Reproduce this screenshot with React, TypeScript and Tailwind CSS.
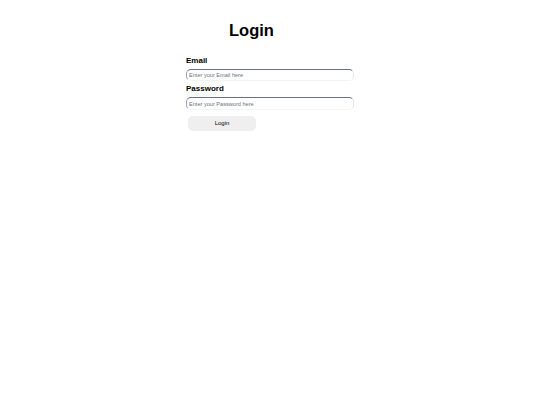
export default function App() {
  return (
    <div className="min-h-[405px] w-[540px] bg-white font-['Liberation_Sans',Arial,sans-serif] text-black">
      <div className="ml-[186px] w-[168px] pt-[20px]">
        {/* Title */}
        <h1 className="ml-[43px] text-[16.5px] font-bold leading-[20px]">Login</h1>

        <form className="mt-[16px] flex flex-col" onSubmit={(e) => e.preventDefault()}>
          <label htmlFor="email" className="text-[8px] font-bold leading-[10px]">
            Email
          </label>
          <input
            id="email"
            type="email"
            placeholder="Enter your Email here"
            className="mt-[3px] h-[12px] w-[168px] rounded-[5px] border border-t-gray-500 border-l-gray-400 border-r-gray-200 border-b-gray-100 pl-[2px] text-[5.6px] outline-none placeholder:text-gray-500"
          />

          <label htmlFor="password" className="mt-[3px] text-[8px] font-bold leading-[10px]">
            Password
          </label>
          <input
            id="password"
            type="password"
            placeholder="Enter your Password here"
            className="mt-[3px] h-[13px] w-[168px] rounded-[5px] border border-t-gray-500 border-l-gray-400 border-r-gray-200 border-b-gray-100 pl-[2px] text-[5.6px] outline-none placeholder:text-gray-500"
          />

          <button
            type="submit"
            className="ml-[2px] mt-[6px] h-[15px] w-[68px] rounded-[5px] bg-[#efefef] text-[6px] text-black"
          >
            Login
          </button>
        </form>
      </div>
    </div>
  );
}
